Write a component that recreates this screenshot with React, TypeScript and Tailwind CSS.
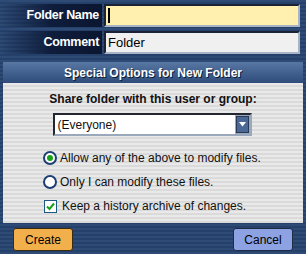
import React, { useState } from 'react';

const stripes = 'bg-[repeating-linear-gradient(180deg,#2d4b74_0px,#2d4b74_2px,#25406a_2px,#25406a_4px)]';

const Radio = ({ checked }: { checked: boolean }) => (
  <span className="w-[14px] h-[14px] rounded-full border-2 border-[#1d3f73] bg-white flex items-center justify-center shrink-0">
    {checked && <span className="w-[6px] h-[6px] rounded-full bg-[#1aa01a]" />}
  </span>
);

const Checkbox = ({ checked }: { checked: boolean }) => (
  <span className="w-[13px] h-[13px] border border-[#1c5a84] bg-white flex items-center justify-center shrink-0">
    {checked && (
      <svg width="9" height="9" viewBox="0 0 9 9">
        <path d="M1 4.5 L3.5 7 L8 1.5" stroke="#17a017" strokeWidth="2" fill="none" />
      </svg>
    )}
  </span>
);

const App = () => {
  const [name, setName] = useState('');
  const [comment, setComment] = useState('Folder');
  const [mode, setMode] = useState('any');
  const [history, setHistory] = useState(true);

  return (
    <div className={`w-[306px] h-[254px] overflow-hidden flex flex-col ${stripes} font-['Liberation_Sans',Arial,sans-serif]`}>
      {/* Top fields */}
      <div className="flex flex-col gap-[4px] pt-[4px]">
        <div className="flex h-[23px]">
          <div className="w-[102px] bg-gradient-to-r from-transparent via-[#0f1d3c] to-[#0b1630] flex items-center justify-end pr-[3px] text-white font-bold text-[12.5px] tracking-[-0.3px]">
            Folder Name
          </div>
          <div className="relative ml-[2px] mr-[6px] flex-1 min-w-0 flex">
            <input
              className="w-full bg-[#fff0b0] border-2 border-t-[#1a2236] border-l-[#1a2236] border-b-[#a8b4c6] border-r-[#a8b4c6] px-[2px] text-[13px] text-black outline-none caret-transparent"
              value={name}
              onChange={e => setName(e.target.value)}
            />
            {/* text cursor */}
            {name === '' && <span className="absolute left-[4px] top-[4px] w-[2px] h-[15px] bg-black" />}
          </div>
        </div>
        <div className="flex h-[23px]">
          <div className="w-[102px] bg-gradient-to-r from-transparent via-[#0f1d3c] to-[#0b1630] flex items-center justify-end pr-[3px] text-white font-bold text-[12.5px] tracking-[-0.3px]">
            Comment
          </div>
          <input
            className="ml-[2px] mr-[6px] flex-1 min-w-0 bg-[#f0f0f0] border-2 border-t-[#1a2236] border-l-[#1a2236] border-b-[#a8b4c6] border-r-[#a8b4c6] px-[2px] text-[13px] text-black outline-none"
            value={comment}
            onChange={e => setComment(e.target.value)}
          />
        </div>
      </div>

      {/* Options panel */}
      <div className="mx-[3px] mt-[8px] flex flex-col">
        <div className="h-[21px] bg-gradient-to-b from-[#5877a3] to-[#2f4c7a] flex items-center justify-center text-white font-bold text-[12px] [text-shadow:1px_1px_0_#0c1a33]">
          Special Options for New Folder
        </div>
        <div className="h-[140px] bg-[repeating-linear-gradient(180deg,#e9e9e9_0px,#e9e9e9_2px,#dadada_2px,#dadada_4px)] flex flex-col items-center pt-[9px] text-[#111]">
          <div className="font-bold text-[12px] leading-[14px]">Share folder with this user or group:</div>
          <div className="mt-[7px] ml-[-2px] w-[199px] h-[23px] flex border-2 border-t-[#23272f] border-l-[#23272f] border-b-[#9aa8bc] border-r-[#9aa8bc]">
            <div className="flex-1 bg-white flex items-center pl-[3px] text-[12px]">(Everyone)</div>
            <div className="w-[15px] bg-[#9aa8bc] p-[1px] flex">
              <div className="flex-1 bg-[#4a6895] border border-[#2a3a55] flex items-center justify-center">
                <svg width="7" height="5" viewBox="0 0 7 5">
                  <path d="M0 0 H7 L3.5 4.5 Z" fill="#fff" />
                </svg>
              </div>
            </div>
          </div>
          <div className="self-start ml-[40px] mt-[15px] flex flex-col gap-[10px] text-[12px]">
            <label className="flex items-center gap-[3px] h-[14px]" onClick={() => setMode('any')}>
              <Radio checked={mode === 'any'} />
              <span>Allow any of the above to modify files.</span>
            </label>
            <label className="flex items-center gap-[3px] h-[14px]" onClick={() => setMode('only')}>
              <Radio checked={mode === 'only'} />
              <span>Only I can modify these files.</span>
            </label>
            <label className="flex items-center gap-[5px] h-[14px] pl-[1px]" onClick={() => setHistory(!history)}>
              <Checkbox checked={history} />
              <span>Keep a history archive of changes.</span>
            </label>
          </div>
        </div>
      </div>

      {/* Buttons */}
      <div className="flex justify-between px-[13px] mt-[5px]">
        <button className="w-[60px] h-[23px] rounded-[3px] border border-[#3a2a10] bg-[#f2b04c] text-[12px] text-black">
          Create
        </button>
        <button className="w-[60px] h-[23px] rounded-[3px] border border-[#1f2a44] bg-[#8ca2e2] text-[12px] text-black">
          Cancel
        </button>
      </div>
    </div>
  );
};

export default App;
